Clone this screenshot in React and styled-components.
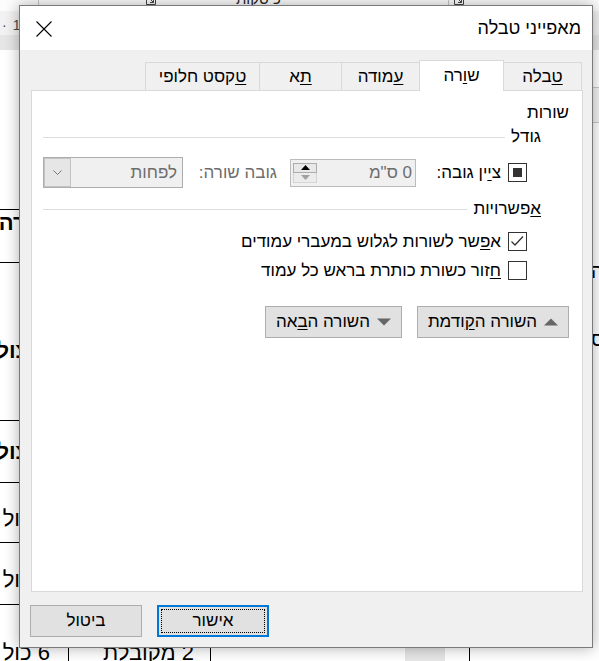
import React from 'react';
import styled, { createGlobalStyle } from 'styled-components';

const GlobalStyle = createGlobalStyle`
    html, body {
        margin: 0;
        padding: 0;
        background: #fff;
    }
    body {
        font-family: "Liberation Sans", "DejaVu Sans", sans-serif;
    }
`;

const Screen = styled.div`
    position: relative;
    width: 599px;
    height: 661px;
    overflow: hidden;
    background: #fff;
`;

/* ---------- the Word document behind the dialog ---------- */

const Ribbon = styled.div`
    height: 11px;
    display: flex;
    align-items: flex-start;
    background: #fcfcfc;
    overflow: hidden;
`;

const RibbonSep = styled.span`
    flex: none;
    width: 1px;
    height: 11px;
    margin-left: ${(p) => p.$left}px;
    background: #c6c6c6;
`;

const RibbonText = styled.span`
    flex: none;
    margin-left: ${(p) => p.$left}px;
    margin-top: -9px;
    font-size: 15px;
    line-height: 15px;
    color: #262626;
    direction: rtl;
    white-space: nowrap;
`;

const LauncherBox = styled.span`
    flex: none;
    margin-left: ${(p) => p.$left}px;
    margin-top: -5px;
    display: flex;
`;

const Ruler = styled.div`
    height: 24px;
    display: flex;
    align-items: flex-end;
    gap: 6px;
    padding: 0 0 2px 2px;
    box-sizing: border-box;
    background: #f2f2f2;
    font-size: 14px;
    color: #4a4a4a;
`;

const MarginBand = styled.div`
    height: 15px;
    background: #e6e6e6;
`;

const Doc = styled.div`
    height: 611px;
    display: flex;
    justify-content: space-between;
`;

const DocTable = styled.div`
    width: 470px;
    margin-top: 159px;
    display: flex;
    flex-direction: column;
`;

const DocRow = styled.div`
    flex: none;
    height: ${(p) => p.$h}px;
    display: grid;
    grid-template-columns: 69px 142px 194px 40px 25px;
    border-top: 1px solid #000;
`;

const DocCell = styled.div`
    direction: rtl;
    white-space: nowrap;
    padding: ${(p) => p.$top}px ${(p) => p.$pad}px 0 0;
    border-right: ${(p) => (p.$line ? '1px solid #000' : 'none')};
    background: ${(p) => (p.$shade ? '#e6e6e6' : 'transparent')};
    font-size: 22px;
    line-height: 26px;
    font-weight: ${(p) => (p.$bold ? 700 : 400)};
    color: #000;
`;

const DocSide = styled.div`
    width: 8px;
    display: flex;
    flex-direction: column;
`;

const SideBox = styled.div`
    height: 34px;
    margin-top: 37px;
    border-top: 1px solid #c8c8c8;
    border-bottom: 1px solid #c8c8c8;
    background: #f3f3f3;
`;

const SideText = styled.div`
    margin-top: ${(p) => p.$top}px;
    font-size: 20px;
    line-height: 20px;
    white-space: nowrap;
`;

/* ---------- dialog ---------- */

const Dialog = styled.div`
    position: absolute;
    left: 19px;
    top: 5px;
    width: 574px;
    height: 643px;
    box-sizing: border-box;
    border: 1px solid #7a7a7a;
    box-shadow: 0 0 14px rgba(0, 0, 0, 0.32);
    display: flex;
    flex-direction: column;
    direction: rtl;
    font-family: "Liberation Sans", "DejaVu Sans", sans-serif;
    font-size: 17px;
    color: #000;
    background: #f0f0f0;
`;

const TitleBar = styled.div`
    height: 44px;
    flex: none;
    display: flex;
    align-items: center;
    justify-content: space-between;
    padding: 0 11px 0 16px;
    background: #fff;
`;

const Title = styled.span`
    font-size: 18px;
`;

const CloseButton = styled.span`
    display: flex;
    margin-top: 1px;
`;

const Body = styled.div`
    flex: 1;
    display: flex;
    flex-direction: column;
    padding: 10px 9px 0 11px;
`;

const TabStrip = styled.div`
    height: 30px;
    display: flex;
    align-items: flex-end;
    padding-right: 1px;
`;

const Tab = styled.div`
    flex: none;
    box-sizing: border-box;
    width: ${(p) => p.$w}px;
    height: ${(p) => (p.$active ? 31 : 28)}px;
    margin-left: -1px;
    margin-bottom: ${(p) => (p.$active ? -1 : 0)}px;
    border: 1px solid #d9d9d9;
    border-bottom: none;
    background: ${(p) => (p.$active ? '#fff' : '#f0f0f0')};
    position: relative;
    z-index: ${(p) => (p.$active ? 2 : 1)};
    display: flex;
    align-items: center;
    justify-content: center;
`;

const Key = styled.u`
    text-decoration-thickness: 1px;
    text-underline-offset: 2px;
`;

const Panel = styled.div`
    height: 502px;
    flex: none;
    box-sizing: border-box;
    border: 1px solid #d9d9d9;
    background: #fff;
    padding: 13px 13px 0 11px;
    display: flex;
    flex-direction: column;
`;

const Heading = styled.div`
    line-height: 18px;
`;

const Section = styled.div`
    display: flex;
    align-items: center;
    gap: 6px;
    margin: ${(p) => p.$top}px 28px 0 0;
    line-height: 18px;

    &::after {
        content: '';
        flex: 1;
        height: 1px;
        background: #dcdcdc;
    }
`;

const FieldRow = styled.div`
    height: 31px;
    display: flex;
    align-items: center;
    margin: 11px 42px 0 0;
`;

const Box = styled.span`
    flex: none;
    width: 19px;
    height: 19px;
    box-sizing: border-box;
    border: 1px solid #333;
    background: #fff;
    display: flex;
    align-items: center;
    justify-content: center;
`;

const Mixed = styled.span`
    width: 9px;
    height: 9px;
    background: #333;
`;

const FieldLabel = styled.span`
    flex: none;
    box-sizing: border-box;
    width: ${(p) => p.$w}px;
    margin-right: ${(p) => p.$gap || 0}px;
    padding-right: ${(p) => p.$pad || 0}px;
    color: ${(p) => (p.$dim ? '#6d6d6d' : '#000')};
    white-space: nowrap;
`;

const SpinBox = styled.div`
    flex: none;
    width: 126px;
    height: 28px;
    box-sizing: border-box;
    border: 1px solid #bcbcbc;
    background: #f0f0f0;
    display: flex;
    align-items: flex-start;
    padding: 2px 3px 0 2px;
`;

const SpinValue = styled.span`
    flex: 1;
    line-height: 22px;
    color: #6d6d6d;
`;

const SpinButtons = styled.div`
    width: 24px;
    height: 20px;
    margin-top: 1px;
    display: flex;
    flex-direction: column;
`;

const SpinButton = styled.div`
    flex: 1;
    box-sizing: border-box;
    border: 1px solid ${(p) => (p.$off ? '#d4d4d4' : '#adadad')};
    border-top: ${(p) => (p.$off ? 'none' : '1px solid #adadad')};
    background: ${(p) => (p.$off ? '#ececec' : '#e8e8e8')};
    display: flex;
    align-items: center;
    justify-content: center;
`;

const SelectBox = styled.div`
    flex: none;
    width: 140px;
    height: 31px;
    box-sizing: border-box;
    border: 1px solid #adadad;
    background: #f0f0f0;
    display: flex;
    align-items: center;
    padding-right: 5px;
`;

const SelectValue = styled.span`
    flex: 1;
    color: #6d6d6d;
`;

const SelectArrow = styled.div`
    width: 27px;
    align-self: stretch;
    box-sizing: border-box;
    border: 1px solid #c4c4c4;
    background: #e6e6e6;
    display: flex;
    align-items: center;
    justify-content: center;
`;

const CheckRow = styled.label`
    height: 19px;
    display: flex;
    align-items: center;
    gap: 7px;
    margin: ${(p) => p.$top}px 42px 0 0;
    white-space: nowrap;
`;

const ButtonRow = styled.div`
    display: flex;
    gap: 15px;
    margin-top: 26px;
`;

const ActionButton = styled.button`
    flex: none;
    width: ${(p) => p.$w}px;
    height: 32px;
    box-sizing: border-box;
    border: 1px solid #adadad;
    background: #e1e1e1;
    display: flex;
    align-items: center;
    justify-content: center;
    gap: 7px;
    padding: 0;
    font: inherit;
    color: #000;
    direction: rtl;
`;

const Footer = styled.div`
    flex: none;
    display: flex;
    justify-content: flex-end;
    gap: 15px;
    padding: 13px 0 10px 10px;
`;

const DialogButton = styled.button`
    position: relative;
    width: 112px;
    height: 32px;
    box-sizing: border-box;
    border: ${(p) => (p.$primary ? '2px solid #0078d7' : '1px solid #adadad')};
    background: #e1e1e1;
    padding: 0;
    font: inherit;
    color: #000;

    &::after {
        content: '';
        display: ${(p) => (p.$primary ? 'block' : 'none')};
        position: absolute;
        inset: 2px;
        border: 1px dotted #000;
    }
`;

const Triangle = ({ down }) => (
    <svg width="14" height="8" viewBox="0 0 14 8">
        <polygon points={down ? '0,0.5 14,0.5 7,7.5' : '0,7.5 14,7.5 7,0.5'} fill="#666" />
    </svg>
);

const SpinArrow = ({ down }) => (
    <svg width="9" height="5" viewBox="0 0 9 5">
        <polygon points={down ? '0,0 9,0 4.5,5' : '0,5 9,5 4.5,0'} fill={down ? '#a0a0a0' : '#000'} />
    </svg>
);

const tabs = [
    { id: 'table', w: 79, label: <><Key>ט</Key>בלה</> },
    { id: 'row', w: 85, label: <>ש<Key>ו</Key>רה</>, active: true },
    { id: 'column', w: 79, label: <><Key>ע</Key>מודה</> },
    { id: 'cell', w: 83, label: <><Key>ת</Key>א</> },
    { id: 'alt', w: 115, label: <><Key>ט</Key>קסט חלופי</> },
];

const docRows = [
    { h: 52, top: 0, a: 'שורה', bold: true },
    { h: 157, top: 75, a: 'פיצול', bold: true },
    { h: 61, top: 18, a: 'פיצול', bold: true },
    { h: 59, top: 23, a: '4 כול' },
    { h: 61, top: 24, a: '5 כול' },
    { h: 100, top: 35, a: '6 כול', b: '2 מקובלת', shade: true },
];

const App = () => (
    <Screen>
        <GlobalStyle />

        <Ribbon>
            <RibbonSep $left={38} />
            <LauncherBox $left={107}>
                <svg width="10" height="10" viewBox="0 0 10 10">
                    <path d="M0.5 0 V9.5 H9.5 V0 M3 3 L7.5 7.5 M7.5 4 V7.5 H4" stroke="#444" fill="none" />
                </svg>
            </LauncherBox>
            <RibbonText $left={80}>כ סקות</RibbonText>
            <RibbonSep $left={167} />
            <LauncherBox $left={5}>
                <svg width="10" height="10" viewBox="0 0 10 10">
                    <path d="M0.5 0 V9.5 H9.5 V0 M3 3 L7.5 7.5 M7.5 4 V7.5 H4" stroke="#444" fill="none" />
                </svg>
            </LauncherBox>
        </Ribbon>
        <Ruler>
            <span>·</span>
            <span>1</span>
        </Ruler>
        <MarginBand />

        <Doc>
            <DocTable>
                {docRows.map((r) => (
                    <DocRow key={r.h + r.a} $h={r.h}>
                        <DocCell $line $pad={18} $top={r.top} $bold={r.bold}>{r.a}</DocCell>
                        <DocCell $line $pad={16} $top={r.top}>{r.b}</DocCell>
                        <DocCell />
                        <DocCell $shade={r.shade} />
                        <DocCell $line />
                    </DocRow>
                ))}
            </DocTable>
            <DocSide>
                <SideBox />
                <SideText $top={138}>מה</SideText>
                <SideText $top={48}>מס</SideText>
            </DocSide>
        </Doc>

        <Dialog>
            <TitleBar>
                <Title>מאפייני טבלה</Title>
                <CloseButton>
                    <svg width="16" height="16" viewBox="0 0 16 16">
                        <path d="M0.5 0.5 L15.5 15.5 M15.5 0.5 L0.5 15.5" stroke="#000" strokeWidth="1.1" fill="none" />
                    </svg>
                </CloseButton>
            </TitleBar>

            <Body>
                <TabStrip>
                    {tabs.map((t) => (
                        <Tab key={t.id} $w={t.w} $active={t.active}>
                            {t.label}
                        </Tab>
                    ))}
                </TabStrip>

                <Panel>
                    <Heading>שורות</Heading>

                    <Section $top={6}>גודל</Section>
                    <FieldRow>
                        <Box>
                            <Mixed />
                        </Box>
                        <FieldLabel $w={85} $gap={7}>
                            צ<Key>י</Key>ין גובה:
                        </FieldLabel>
                        <SpinBox>
                            <SpinValue>{'0 ס"מ'}</SpinValue>
                            <SpinButtons>
                                <SpinButton>
                                    <SpinArrow />
                                </SpinButton>
                                <SpinButton $off>
                                    <SpinArrow down />
                                </SpinButton>
                            </SpinButtons>
                        </SpinBox>
                        <FieldLabel $w={107} $pad={13} $dim>
                            גובה שורה:
                        </FieldLabel>
                        <SelectBox>
                            <SelectValue>לפחות</SelectValue>
                            <SelectArrow>
                                <svg width="9" height="5" viewBox="0 0 9 5">
                                    <path d="M0.5 0.5 L4.5 4.5 L8.5 0.5" stroke="#777" fill="none" />
                                </svg>
                            </SelectArrow>
                        </SelectBox>
                    </FieldRow>

                    <Section $top={12}>
                        <span>
                            <Key>א</Key>פשרויות
                        </span>
                    </Section>
                    <CheckRow $top={14}>
                        <Box>
                            <svg width="17" height="17" viewBox="0 0 17 17">
                                <polyline points="2.5,8.5 6,12 14,3.5" stroke="#333" strokeWidth="1.3" fill="none" />
                            </svg>
                        </Box>
                        <span>
                            א<Key>פ</Key>שר לשורות לגלוש במעברי עמודים
                        </span>
                    </CheckRow>
                    <CheckRow $top={10}>
                        <Box />
                        <span>
                            <Key>ח</Key>זור כשורת כותרת בראש כל עמוד
                        </span>
                    </CheckRow>

                    <ButtonRow>
                        <ActionButton $w={152}>
                            <Triangle />
                            <span>
                                השורה ה<Key>ק</Key>ודמת
                            </span>
                        </ActionButton>
                        <ActionButton $w={137}>
                            <Triangle down />
                            <span>
                                השורה ה<Key>ב</Key>אה
                            </span>
                        </ActionButton>
                    </ButtonRow>
                </Panel>
            </Body>

            <Footer>
                <DialogButton $primary>אישור</DialogButton>
                <DialogButton>ביטול</DialogButton>
            </Footer>
        </Dialog>
    </Screen>
);

export default App;
